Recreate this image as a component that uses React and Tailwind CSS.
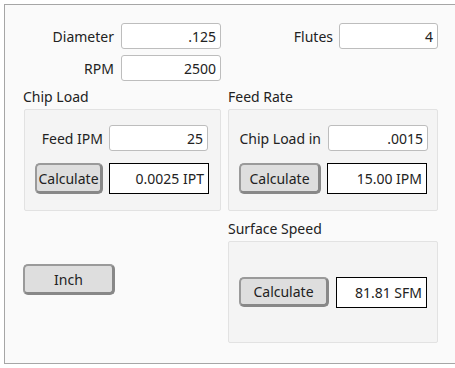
const font = { fontFamily: '"Noto Sans", "Open Sans", sans-serif' };

function Field({ value, w = "w-[100px]" }) {
  return (
    <div className={`${w} h-[26px] bg-white border border-[#bdbdbd] rounded-[3px] flex items-center justify-end pr-[4px] text-[14px] text-[#222]`}>
      {value}
    </div>
  );
}

function Output({ value, w = "w-[100px]" }) {
  return (
    <div className={`${w} h-[31px] bg-white border border-black flex items-center justify-end pr-[4px] text-[14px] text-[#222]`}>
      {value}
    </div>
  );
}

function Button({ children, w, h = "h-[31px]" }) {
  return (
    <button className={`${w} ${h} bg-[#dedede] border-2 border-[#9a9a9a] border-b-[3px] border-r-[3px] border-b-[#888] border-r-[#888] rounded-[5px] flex items-center justify-center text-[14px] text-[#222]`}>
      {children}
    </button>
  );
}

export default function App() {
  return (
    <div className="w-[455px] h-[368px] bg-white pt-[4px] pl-[4px] overflow-hidden" style={font}>
      <div className="w-[460px] h-[360px] bg-[#fafafa] border-l border-t border-b border-[#a6a6a6] pl-[19px] pt-[18px]">
        <div className="grid grid-cols-[197px_210px] gap-x-[7px]">
          {/* top fields */}
          <div className="flex flex-col gap-[6px]">
            <div className="flex items-center justify-end gap-[7px] pr-0">
              <span className="text-[14px] text-[#222]">Diameter</span>
              <Field value=".125" />
            </div>
            <div className="flex items-center justify-end gap-[7px]">
              <span className="text-[14px] text-[#222]">RPM</span>
              <Field value="2500" />
            </div>
          </div>
          <div className="flex flex-col">
            <div className="flex items-center justify-end gap-[6px]">
              <span className="text-[14px] text-[#222]">Flutes</span>
              <Field value="4" w="w-[99px]" />
            </div>
          </div>

          {/* chip load */}
          <div className="mt-[6px]">
            <div className="h-[20px] text-[14px] text-[#222] leading-[20px] -ml-px">Chip Load</div>
            <div className="mt-[2px] h-[102px] bg-[#f4f4f4] border border-[#e2e2e2] rounded-[2px] pl-[10px] pt-[15px]">
              <div className="flex items-center justify-end gap-[6px] w-[173px]">
                <span className="text-[14px] text-[#222]">Feed IPM</span>
                <Field value="25" w="w-[99px]" />
              </div>
              <div className="flex items-center gap-[6px] mt-[12px]">
                <Button w="w-[68px]">Calculate</Button>
                <Output value="0.0025 IPT" />
              </div>
            </div>
          </div>

          {/* feed rate */}
          <div className="mt-[6px]">
            <div className="h-[20px] text-[14px] text-[#222] leading-[20px]">Feed Rate</div>
            <div className="mt-[2px] h-[102px] bg-[#f4f4f4] border border-[#e2e2e2] rounded-[2px] pl-[10px] pt-[15px]">
              <div className="flex items-center justify-end gap-[7px] w-[189px]">
                <span className="text-[14px] text-[#222]">Chip Load in</span>
                <Field value=".0015" />
              </div>
              <div className="flex items-center gap-[6px] mt-[12px]">
                <Button w="w-[82px]">Calculate</Button>
                <Output value="15.00 IPM" />
              </div>
            </div>
          </div>

          {/* inch */}
          <div className="pt-[53px] -ml-px">
            <Button w="w-[92px]">Inch</Button>
          </div>

          {/* surface speed */}
          <div className="mt-[8px]">
            <div className="h-[20px] text-[14px] text-[#222] leading-[20px]">Surface Speed</div>
            <div className="mt-[2px] h-[102px] bg-[#f4f4f4] border border-[#e2e2e2] rounded-[2px] pl-[10px] flex items-center gap-[7px]">
              <Button w="w-[90px]" h="h-[30px]">Calculate</Button>
              <Output value="81.81 SFM" w="w-[91px]" />
            </div>
          </div>
        </div>
      </div>
    </div>
  );
}
